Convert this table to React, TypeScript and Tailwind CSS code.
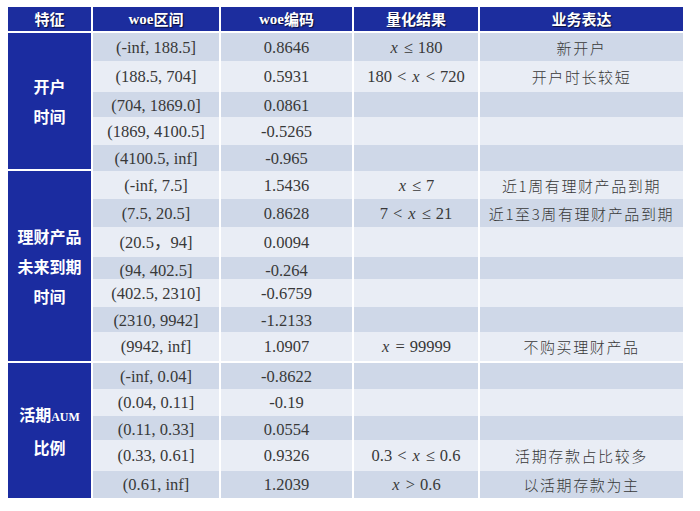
type Row = {
  range: string;
  woe: string;
  h: number;
  math?: string;
  desc?: string;
};

type Group = {
  label: string[];
  rows: Row[];
};

const groups: Group[] = [
  {
    label: ["开户", "时间"],
    rows: [
      { range: "(-inf, 188.5]", woe: "0.8646", h: 28, math: "x ≤ 180", desc: "新开户" },
      { range: "(188.5, 704]", woe: "0.5931", h: 31, math: "180 < x < 720", desc: "开户时长较短" },
      { range: "(704, 1869.0]", woe: "0.0861", h: 25 },
      { range: "(1869, 4100.5]", woe: "-0.5265", h: 28 },
      { range: "(4100.5, inf]", woe: "-0.965", h: 24 },
    ],
  },
  {
    label: ["理财产品", "未来到期", "时间"],
    rows: [
      { range: "(-inf, 7.5]", woe: "1.5436", h: 28, math: "x ≤ 7", desc: "近1周有理财产品到期" },
      { range: "(7.5, 20.5]", woe: "0.8628", h: 28, math: "7 < x ≤ 21", desc: "近1至3周有理财产品到期" },
      { range: "(20.5，94]", woe: "0.0094", h: 30 },
      { range: "(94, 402.5]", woe: "-0.264", h: 22 },
      { range: "(402.5, 2310]", woe: "-0.6759", h: 28 },
      { range: "(2310, 9942]", woe: "-1.2133", h: 25 },
      { range: "(9942, inf]", woe: "1.0907", h: 29, math: "x = 99999", desc: "不购买理财产品" },
    ],
  },
  {
    label: ["活期AUM", "比例"],
    rows: [
      { range: "(-inf, 0.04]", woe: "-0.8622", h: 26 },
      { range: "(0.04, 0.11]", woe: "-0.19", h: 27 },
      { range: "(0.11, 0.33]", woe: "0.0554", h: 24 },
      { range: "(0.33, 0.61]", woe: "0.9326", h: 31, math: "0.3 < x ≤ 0.6", desc: "活期存款占比较多" },
      { range: "(0.61, inf]", woe: "1.2039", h: 27, math: "x > 0.6", desc: "以活期存款为主" },
    ],
  },
];

const cjk = "font-['Noto_Sans_CJK_SC',sans-serif]";
const serif = "font-['Liberation_Serif','Noto_Sans_CJK_SC',serif]";

// x 斜体，运算符两边留点空
function MathText({ s }: { s: string }) {
  return (
    <span className="whitespace-nowrap">
      {s.split(" ").map((t, i) =>
        t === "x" ? (
          <i key={i} className="mx-[1px]">x</i>
        ) : /^[<>≤=]$/.test(t) ? (
          <span key={i} className="mx-[5px]">{t}</span>
        ) : (
          <span key={i}>{t}</span>
        )
      )}
    </span>
  );
}

function LabelText({ line }: { line: string }) {
  if (line.endsWith("AUM")) {
    return (
      <div>
        {line.slice(0, -3)}
        <span className={`${serif} text-[12px] font-bold`}>AUM</span>
      </div>
    );
  }
  return <div>{line}</div>;
}

const heads = ["特征", "woe区间", "woe编码", "量化结果", "业务表达"];

export default function App() {
  let idx = 0;
  return (
    <div className="min-h-[511px] w-[700px] bg-white pt-[7px] pl-[8px]">
      <div className="w-[675px] text-[#383838]">
        <div className="grid h-[24px] grid-cols-[83px_126px_131px_124px_203px] gap-x-[2px]">
          {heads.map((h) => (
            <div
              key={h}
              className={`${cjk} flex items-center justify-center bg-[#1c2d9e] text-[15px] font-bold text-white [text-shadow:1px_1px_1px_rgba(0,0,20,0.7)]`}
            >
              {h.startsWith("woe") ? (
                <>
                  <span className={`${serif} text-[15px]`}>woe</span>
                  {h.slice(3)}
                </>
              ) : (
                h
              )}
            </div>
          ))}
        </div>

        {groups.map((g) => (
          <div key={g.label.join("")} className="mt-[2px] flex gap-x-[2px]">
            <div
              className={`${cjk} flex w-[83px] shrink-0 flex-col items-center justify-center bg-[#1b2ca0] text-[16px] leading-[30px] font-bold text-white`}
            >
              {g.label.map((l) => (
                <LabelText key={l} line={l} />
              ))}
            </div>
            <div className="flex flex-1 flex-col">
              {g.rows.map((r) => {
                const dark = idx++ % 2 === 0;
                const bg = dark ? "bg-[#cfd8e8]" : "bg-[#e9edf5]";
                return (
                  <div
                    key={r.range}
                    className="grid grid-cols-[126px_131px_124px_203px] gap-x-[2px]"
                    style={{ height: r.h }}
                  >
                    <div className={`${bg} ${serif} flex items-center justify-center pt-[2px] text-[16.5px]`}>
                      {r.range}
                    </div>
                    <div className={`${bg} ${serif} flex items-center justify-center pt-[2px] text-[16.5px]`}>
                      {r.woe}
                    </div>
                    <div className={`${bg} ${serif} flex items-center justify-center pt-[2px] text-[16.5px]`}>
                      {r.math && <MathText s={r.math} />}
                    </div>
                    <div
                      className={`${bg} ${cjk} flex items-center justify-center pt-[2px] text-[15px] font-light tracking-[1.6px]`}
                    >
                      {r.desc}
                    </div>
                  </div>
                );
              })}
            </div>
          </div>
        ))}
      </div>
    </div>
  );
}
